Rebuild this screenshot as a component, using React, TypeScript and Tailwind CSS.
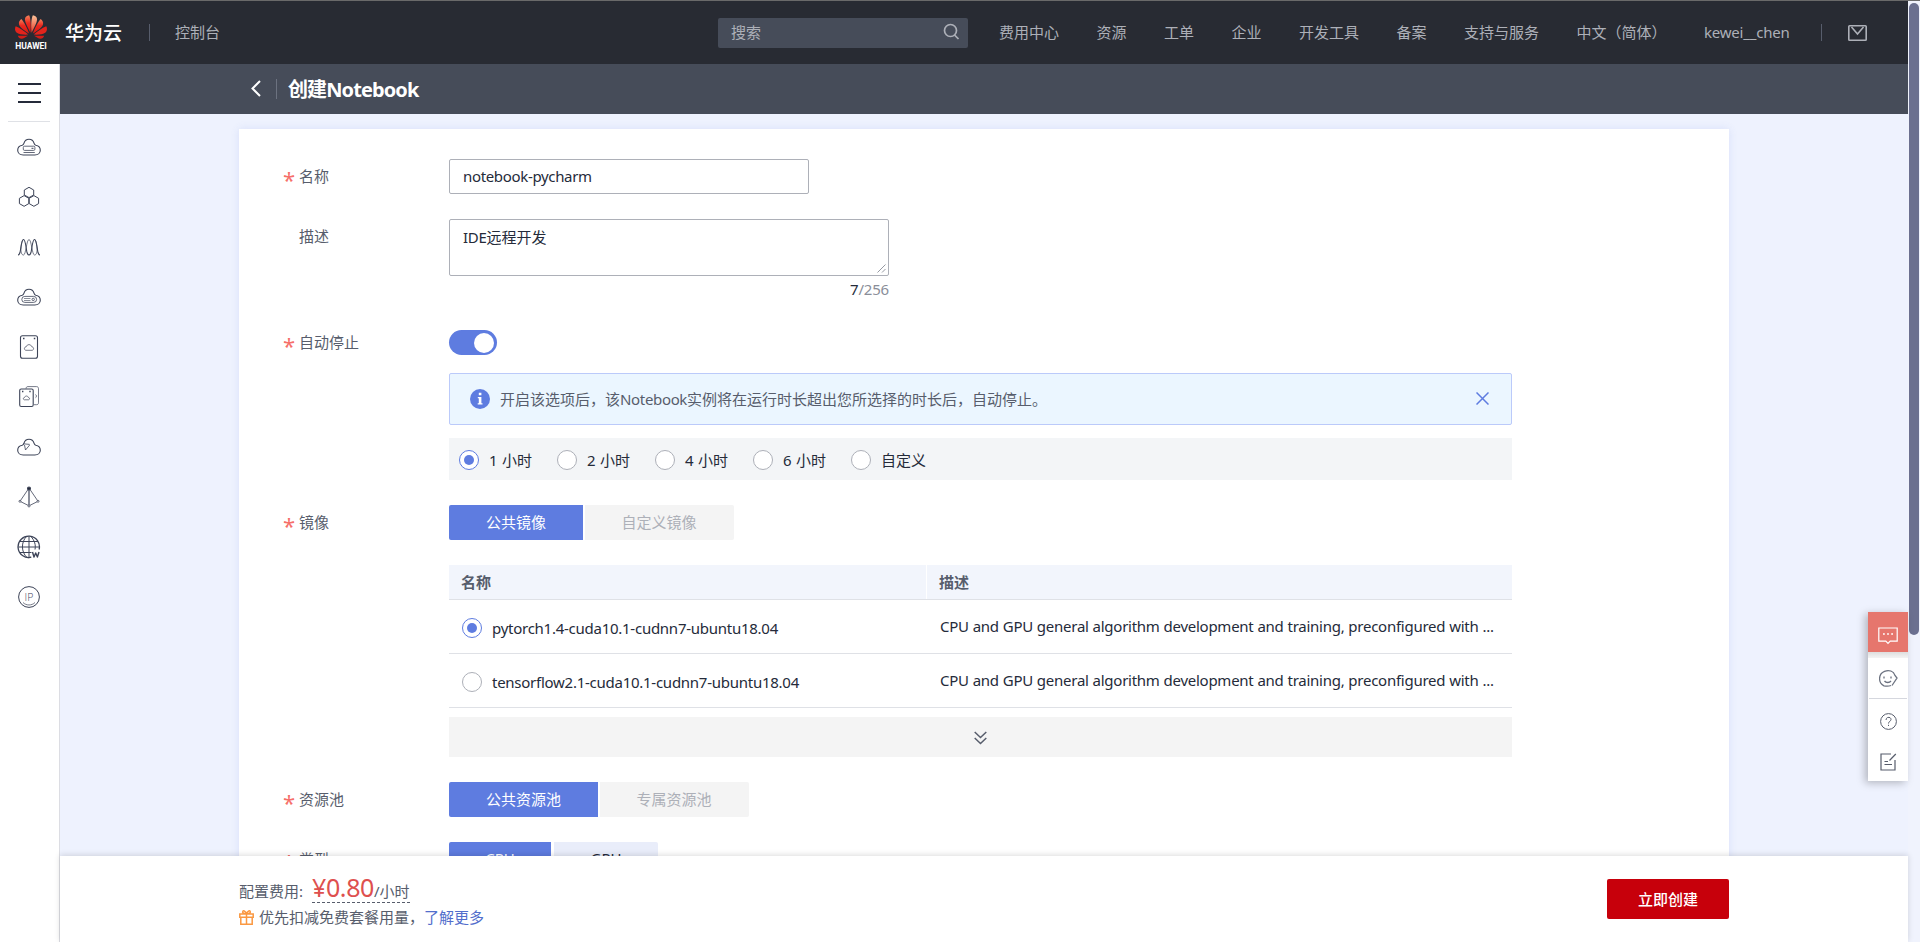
import React from "react";

const navItems = ["费用中心", "资源", "工单", "企业", "开发工具", "备案", "支持与服务", "中文（简体）"];

const hours = [
  { id: 1, title: "1 小时" },
  { id: 2, title: "2 小时" },
  { id: 3, title: "4 小时" },
  { id: 4, title: "6 小时" },
  { id: 5, title: "自定义" },
];

const images = [
  {
    id: 1,
    title: "pytorch1.4-cuda10.1-cudnn7-ubuntu18.04",
    content: "CPU and GPU general algorithm development and training, preconfigured with ...",
  },
  {
    id: 2,
    title: "tensorflow2.1-cuda10.1-cudnn7-ubuntu18.04",
    content: "CPU and GPU general algorithm development and training, preconfigured with ...",
  },
];

const cloud =
  "M6.2 20C3 20 .7 18 .7 15.2c0-2.600 1.900-4.400 4.500-4.900 1-.3 1.300-.8 1.700-2C7.700 5.600 9.700 4.200 12 4.200s4.300 1.400 5.100 4.100c.4 1.200.7 1.700 1.700 2 2.600.5 4.500 2.300 4.500 4.900 0 2.800-2.300 4.800-5.500 4.800z";

const HuaweiLogo = () => (
  <svg width="32" height="25" viewBox="0 0 32 25">
    <defs>
      <linearGradient id="petal" x1="0" y1="0" x2="0" y2="1">
        <stop offset="0" stopColor="#f4845c" />
        <stop offset="0.45" stopColor="#ea2a20" />
        <stop offset="1" stopColor="#d9150f" />
      </linearGradient>
      <linearGradient id="petalLight" x1="0" y1="0" x2="0" y2="1">
        <stop offset="0" stopColor="#fbc39a" />
        <stop offset="1" stopColor="#ea3a28" />
      </linearGradient>
    </defs>
    <path d="M15.400 17.800C12.600 12.200 10.200 8 9.900 4.600 9.800 1.800 12 .5 14.100.2c1.700 3 2 10.600 1.300 17.600z" fill="url(#petal)" />
    <path d="M16.600 17.800C19.400 12.200 21.800 8 22.100 4.600 22.200 1.800 20 .5 17.900.2c-1.700 3-2 10.600-1.300 17.600z" fill="url(#petalLight)" />
    <path d="M14.200 18.600C10.600 16.400 5 12.700 4 9.500c-.6-2.600.8-4.700 2.400-5.600 2.500 3 6 9.400 7.800 14.700z" fill="url(#petal)" />
    <path d="M17.800 18.600C21.400 16.400 27 12.700 28 9.500c.6-2.600-.8-4.700-2.400-5.600-2.500 3-6 9.400-7.800 14.700z" fill="url(#petal)" />
    <path d="M13.300 19.600C9.200 19.800 3.600 19.600 1.500 17.600-.4 15.800-.2 13.200.7 11.300c4.200 1.700 9.300 5.200 12.600 8.300z" fill="#e3241c" />
    <path d="M18.700 19.600c4.100.2 9.700 0 11.800-2 1.900-1.800 1.700-4.400.8-6.300-4.200 1.700-9.300 5.200-12.600 8.300z" fill="#e3241c" />
    <path d="M13 20.700c-2.600 1.500-4.500 3-6.300 3.100-2 .1-3.200-1.300-3.900-3.100z" fill="#d41d17" />
    <path d="M19 20.700c2.600 1.500 4.500 3 6.300 3.100 2 .1 3.200-1.300 3.900-3.100z" fill="#d41d17" />
  </svg>
);

const SideIcon: React.FC<{ children: React.ReactNode }> = ({ children }) => (
  <div className="flex h-[50px] items-center justify-center">
    <svg width="24" height="24" viewBox="0 0 24 24" fill="none" stroke="#3d4458" strokeWidth="1.1" strokeLinejoin="round">
      {children}
    </svg>
  </div>
);

const Sidebar = () => (
  <aside className="flex w-[60px] shrink-0 flex-col border-r border-[#dcdde3] bg-white pr-px">
    <div className="flex h-[57px] flex-col items-center justify-center gap-[7px] pt-px">
      <div className="h-[2px] w-[23px] bg-[#252b3a]" />
      <div className="h-[2px] w-[23px] bg-[#252b3a]" />
      <div className="h-[2px] w-[23px] bg-[#252b3a]" />
    </div>
    <div className="mx-2 h-px bg-[#dfe1e6]" />
    <SideIcon>
      <path d={cloud} />
      <rect x="6.300" y="11.200" width="11.600" height="4.200" rx="1.200" strokeWidth="0.800" />
      <path d="M14.500 13.300h2" strokeWidth="1" />
      <path d="M6.500 17.500h11.300" strokeWidth="0.800" />
    </SideIcon>
    <SideIcon>
      <g strokeWidth="1">
        <path d="M12 2.300l4.700 2.700v5L12 12.600 7.300 10V5z" />
        <path d="M7.100 10.600l4.700 2.700v5.300l-4.700 2.700-4.700-2.700v-5.300z" />
        <path d="M16.900 10.600l4.700 2.700v5.300l-4.700 2.700-4.700-2.700v-5.300z" />
      </g>
    </SideIcon>
    <SideIcon>
      <path d="M1 20c1 0 1.500-.8 2-2.500C4 13 4.500 4.500 6.500 4.500S9 13 10 17.500c.5 1.700 1 2.500 2 2.500s1.500-.8 2-2.500c1-4.500 1.500-13 3.500-13S20 13 21 17.500c.5 1.700 1 2.500 2 2.500" />
      <path d="M6.500 20c-2 0-2.800-3-2.500-7s1.200-8.500 2.500-8.500M6.500 20C9 20 9.500 4.500 12 4.500S15 20 17.500 20c2 0 2.800-3 2.500-7s-1.200-8.500-2.500-8.500" strokeWidth="0.700" />
    </SideIcon>
    <SideIcon>
      <path d={cloud} />
      <rect x="4.800" y="11.400" width="14.800" height="6" rx="3" strokeWidth="0.800" />
      <circle cx="16.200" cy="14.400" r="1.200" strokeWidth="0.800" />
      <path d="M7 13.500h6.500M7 15.500h6.500" strokeWidth="0.600" />
    </SideIcon>
    <SideIcon>
      <rect x="3.500" y="0.700" width="17" height="22.600" rx="2" />
      <path d="M6 3.500h1.500M16.800 3.500h1.500" strokeWidth="1.300" />
      <path d="M8.800 15.300c-1.900-.4-1.900-3.300.3-3.400.8-3 5-3 5.800 0 2.200.1 2.200 3 .3 3.400z" strokeWidth="0.700" />
    </SideIcon>
    <SideIcon>
      <path d="M9 3.600c0-1.200.7-2 2-2h8.500c1.300 0 2 .8 2 2v14.200c0 1.200-.7 1.900-2 1.900H17" strokeWidth="0.700" />
      <path d="M18.500 9.500c1.200.3 1.200 3 0 3.200" strokeWidth="0.700" />
      <rect x="2.700" y="4" width="13.500" height="17.500" rx="1.500" />
      <path d="M5 6.500h1.400M12.300 6.500h1.400" strokeWidth="1.300" />
      <path d="M7.300 14.800c-1.300-.3-1.300-2.200.2-2.300.6-2 3.300-2 3.900 0 1.500.1 1.500 2 .2 2.300z" strokeWidth="0.700" />
    </SideIcon>
    <SideIcon>
      <path d={cloud} />
      <path d="M6.200 8.800l6.500.600M7.500 10l1 5 4.200-5" strokeWidth="0.800" />
    </SideIcon>
    <SideIcon>
      <path d="M11 4.500L3.500 15.500M13 4.500l7.500 11M4 16.800l7 3.500M20 16.800l-7 3.500" strokeWidth="0.800" />
      <path d="M12 4v16" strokeWidth="1.200" />
      <circle cx="12" cy="3.500" r="1.500" fill="#252b3a" />
      <circle cx="3" cy="16.300" r="1" strokeWidth="0.800" />
      <circle cx="21" cy="16.300" r="1" strokeWidth="0.800" />
      <circle cx="12" cy="21" r="1" strokeWidth="0.800" />
    </SideIcon>
    <SideIcon>
      <path d="M22.100 14.500a10.700 10.700 0 1 0-7.800 7.700" strokeWidth="1.300" />
      <path d="M14 22.300c-1.300.5-2.600.5-4 .2C4 17 4 7 9.500 1.500M14 1.500c3.500 4 5 8.500 4 13M12 1.300v21.400M1.300 12h21.400M3 6.500h18M3 17.500h11.500" strokeWidth="1" />
      <path d="M15.500 17l1.500 5 1.700-4 1.700 4 1.600-5" strokeWidth="1.400" />
    </SideIcon>
    <SideIcon>
      <circle cx="12" cy="12" r="10.400" strokeWidth="1" />
      <path d="M6 17.500c3.300 3.300 8.700 3.300 12 0" strokeWidth="0.700" />
      <text x="12" y="15.500" textAnchor="middle" fontSize="10.500" fontWeight="300" fill="#3d4458" stroke="none" fontFamily="Open Sans, sans-serif">
        IP
      </text>
    </SideIcon>
  </aside>
);

const Header = () => (
  <header className="flex h-16 shrink-0 items-center border-t border-[#6a6a6a] bg-[#282b33] text-[15px] text-[#adb0b8]">
    <div className="ml-[15px] flex w-8 flex-col items-center gap-[3px]">
      <HuaweiLogo />
      <span className="font-['Roboto',sans-serif] text-[8.500px] leading-[7px] font-bold text-white">HUAWEI</span>
    </div>
    <span className="ml-[18px] text-[19px] font-medium text-white">华为云</span>
    <div className="ml-[27px] h-[17px] w-px bg-[#575d6c]" />
    <span className="ml-[25px] pb-[2px]">控制台</span>
    <div className="mr-[31px] ml-auto flex h-[30px] w-[250px] items-center justify-between rounded-xs bg-[#464c59] pr-[8px] pb-[2px] pl-[13px]">
      <span>搜索</span>
      <svg width="17" height="17" viewBox="0 0 17 17" fill="none" stroke="#adb0b8" strokeWidth="1.700">
        <circle cx="7.500" cy="7.500" r="6" />
        <path d="M11.500 12l4 4" />
      </svg>
    </div>
    <nav className="flex gap-[37.500px] pb-[2px]">
      {navItems.map(item => (
        <span key={item}>{item}</span>
      ))}
      <span className="w-[86px] tracking-[-0.200px] whitespace-nowrap">kewei__chen</span>
    </nav>
    <div className="ml-[31px] h-[17px] w-px bg-[#575d6c]" />
    <svg className="mr-[41px] ml-[26px]" width="19" height="16" viewBox="0 0 19 16" fill="none" stroke="#adb0b8" strokeWidth="1.600">
      <rect x="0.800" y="0.800" width="17.400" height="14.400" rx="0.800" />
      <path d="M3.500 2l6 7 6-7" />
    </svg>
  </header>
);

const Radio: React.FC<{ checked: boolean }> = ({ checked }) => (
  <span
    className={`flex size-5 shrink-0 items-center justify-center rounded-full border bg-white ${
      checked ? "border-[#5e7ce0]" : "border-[#adb0b8]"
    }`}
  >
    {checked && <span className="size-[10px] rounded-full bg-[#5e7ce0]" />}
  </span>
);

interface FormRowProps {
  label: string;
  required?: boolean;
  short?: boolean;
  children: React.ReactNode;
}

const FormRow: React.FC<FormRowProps> = ({ label, required, short, children }) => (
  <div className="flex shrink-0">
    <div className={`flex w-[166px] shrink-0 items-center pb-[2px] ${short ? "h-[25px]" : "h-[35px]"}`}>
      <span className="w-4 pt-[7px] text-[22px] leading-none text-[#f66f6a]">{required && "*"}</span>
      <span className="text-[#575d6c]">{label}</span>
    </div>
    <div className="w-[1063px]">{children}</div>
  </div>
);

const ImageTable = () => (
  <div className="mt-[25px]">
    <div className="flex h-[35px] border-b border-[#dfe1e6] bg-[#f2f5fc] font-bold text-[#575d6c]">
      <div className="flex w-[478px] items-center border-r border-white pb-px pl-3">名称</div>
      <div className="flex items-center pb-px pl-[12px]">描述</div>
    </div>
    {images.map((item, index) => (
      <div key={item.id} className="flex h-[54px] border-b border-[#dfe1e6]">
        <div className="flex w-[491px] items-center gap-[10px] pt-[2px] pl-[13px]">
          <Radio checked={index === 0} />
          <span className="tracking-[-0.260px]">{item.title}</span>
        </div>
        <div className="flex items-center pb-[1px] tracking-[-0.260px] [word-spacing:0.3px] whitespace-nowrap">
          {item.content}
        </div>
      </div>
    ))}
    <div className="mt-[9px] flex h-10 items-center justify-center bg-[#f4f4f4] pt-[2px]">
      <svg width="13" height="14" viewBox="0 0 13 14" fill="none" stroke="#575d6c" strokeWidth="1.500">
        <path d="M0.700 1l5.800 5.500L12.300 1M0.700 7l5.800 5.500L12.300 7" />
      </svg>
    </div>
  </div>
);

const CreateForm = () => (
  <div className="mx-auto flex w-[1490px] flex-col gap-[25px] bg-white pt-[30px] pl-11 shadow-[0_0_8px_rgba(94,124,224,0.150)]">
    <FormRow label="名称" required>
      <div className="flex h-[35px] w-[360px] items-center rounded-xs border border-[#adb0b8] pb-[2px] pl-[13px] tracking-[-0.340px]">
        notebook-pycharm
      </div>
    </FormRow>
    <FormRow label="描述">
      <div className="flex h-[57px] w-[440px] items-end justify-between rounded-xs border border-[#adb0b8] pl-[13px]">
        <span className="self-start pt-[6px]">
          <span className="tracking-[-0.300px]">IDE</span>远程开发
        </span>
        <svg className="mr-[2px] mb-[2px]" width="9" height="9" viewBox="0 0 9 9" stroke="#8a8e99" strokeWidth="0.900">
          <path d="M0.500 8.500l8-8M5 8.500L8.500 5" />
        </svg>
      </div>
      <div className="h-[29px] w-[440px] pt-[2px] text-right tracking-[-0.200px] text-[#8a8e99]">
        <span className="text-[#252b3a]">7</span>/256
      </div>
    </FormRow>
    <FormRow label="自动停止" required short>
      <div className="flex h-[25px] w-12 items-center justify-end rounded-full bg-[#5e7ce0] pr-[3px]">
        <div className="size-5 rounded-full bg-white" />
      </div>
      <div className="mt-[18px] flex h-[52px] items-center rounded-xs border border-[#bbcafa] bg-[#ebf6ff] pr-[22px] pl-5 text-[#575d6c]">
        <svg width="20" height="20" viewBox="0 0 20 20">
          <circle cx="10" cy="10" r="10" fill="#5e7ce0" />
          <path d="M8.800 3.800h2.600v2.500H8.800zM7.800 8h3.600v6.200h1.100v1.300H7.700v-1.300h1.100v-5h-1z" fill="#fff" />
        </svg>
        <span className="ml-[10px] flex-1">
          开启该选项后，该<span className="tracking-[-0.340px]">Notebook</span>实例将在运行时长超出您所选择的时长后，自动停止。
        </span>
        <svg className="mb-[2px]" width="13" height="13" viewBox="0 0 13 13" stroke="#5e7ce0" strokeWidth="1.500">
          <path d="M0.500 0.500l12 12M12.500 0.500l-12 12" />
        </svg>
      </div>
      <div className="mt-[13px] flex h-[42px] items-center bg-[#f3f5f7] pl-[10px]">
        {hours.map((item, index) => (
          <div key={item.id} className="flex w-[98px] items-center gap-[10px] pt-px whitespace-nowrap [word-spacing:0.6px]">
            <Radio checked={index === 0} />
            <span>{item.title}</span>
          </div>
        ))}
      </div>
    </FormRow>
    <FormRow label="镜像" required>
      <div className="flex h-[35px] gap-[2px]">
        <div className="flex w-[134px] items-center justify-center rounded-l-xs bg-[#5e7ce0] pb-[2px] text-white">公共镜像</div>
        <div className="flex w-[149px] items-center justify-center rounded-r-xs bg-[#f4f4f4] pr-px pb-[2px] text-[#adb0b8]">自定义镜像</div>
      </div>
      <ImageTable />
    </FormRow>
    <FormRow label="资源池" required>
      <div className="flex h-[35px] gap-[2px]">
        <div className="flex w-[149px] items-center justify-center rounded-l-xs bg-[#5e7ce0] pb-[2px] text-white">公共资源池</div>
        <div className="flex w-[149px] items-center justify-center rounded-r-xs bg-[#f4f4f4] pr-px pb-[2px] text-[#adb0b8]">专属资源池</div>
      </div>
    </FormRow>
    <FormRow label="类型" required>
      <div className="flex h-[35px] gap-[3px]">
        <div className="flex w-[102px] items-center justify-center rounded-l-xs bg-[#5e7ce0] pb-[3px] text-white">CPU</div>
        <div className="flex w-[104px] items-center justify-center rounded-r-xs bg-[#e9edfa] pb-[3px]">GPU</div>
      </div>
    </FormRow>
  </div>
);

const Footer = () => (
  <footer className="relative flex h-[86px] shrink-0 items-start justify-between bg-white pr-[179px] pl-[179px] text-[#575d6c] shadow-[0_-1px_6px_rgba(0,0,0,0.140)]">
    <div className="pt-[14px]">
      <div className="flex h-[33px] items-end">
        <span className="pb-[1px]">配置费用:</span>
        <span className="ml-[9px] flex h-[33px] items-baseline border-b border-dashed border-[#575d6c]">
          <span className="text-[25px] leading-[34px] tracking-[-0.400px] text-[#de504e]">¥0.80</span>
          <span>/小时</span>
        </span>
      </div>
      <div className="mt-[3px] flex items-center">
        <svg width="15" height="15" viewBox="0 0 15 15" fill="none" stroke="#fa9841" strokeWidth="1.500">
          <path d="M0.800 4h13.400v3.300H0.800zM1.800 7.300v6.900h11.400V7.300M7.500 4v10M7.500 4C5 4 3 2.500 3.800 1.300S7 1.500 7.500 4c.5-2.500 2.900-3.900 3.700-2.700S10 4 7.500 4" />
        </svg>
        <span className="ml-[5px]">优先扣减免费套餐用量，</span>
        <span className="text-[#526ecc]">了解更多</span>
      </div>
    </div>
    <button className="mt-[23px] h-10 w-[122px] rounded-xs bg-[#c7000b] font-medium text-white">立即创建</button>
  </footer>
);

const FloatingTools = () => (
  <div className="absolute top-[612px] right-3 flex w-10 flex-col bg-white text-[#575d6c] shadow-[-3px_2px_8px_rgba(0,0,0,0.250)]">
    <div className="flex h-10 items-center justify-center bg-[#e6766d] pt-2">
      <svg width="20" height="18" viewBox="0 0 20 18" fill="none" stroke="#fff" strokeWidth="1.200">
        <path d="M0.800 1h18.400v13.200h-7L10 16.500l-2.200-2.300h-7z" />
        <path d="M5 7h1.800M9.100 7h1.800M13.200 7H15" strokeWidth="1.600" />
      </svg>
    </div>
    <div className="h-[6px] bg-linear-to-b from-[#dedede] to-[#f4f4f4]" />
    <div className="mx-px flex h-[41px] items-center justify-center border-b border-[#d5d7de]">
      <svg width="19" height="17" viewBox="0 0 19 17" fill="none" stroke="#6c7280" strokeWidth="1.300">
        <path d="M12 15.500c-2 .8-5 .8-7 .3-6-3-6-11.800.5-14.500C10 0 14.500 1 16 5.500l2 2.500-5 7.500" />
        <path d="M5 6.500v2M12 6.500v2M5.500 11c1.500 2 5 2 6.500 0" />
      </svg>
    </div>
    <div className="flex h-[44px] items-center justify-center pl-px">
      <svg width="17" height="17" viewBox="0 0 17 17" fill="none" stroke="#575d6c" strokeWidth="1">
        <circle cx="8.500" cy="8.500" r="7.900" />
        <path d="M6 7c0-3.500 5-3.500 5-.5 0 1.800-2.500 1.800-2.500 4M8.500 11.800v1.200" />
      </svg>
    </div>
    <div className="flex h-[38px] items-center justify-center">
      <svg width="17" height="18" viewBox="0 0 17 18" fill="none" stroke="#575d6c" strokeWidth="1.200">
        <path d="M11 1H1v16h14V7M15.800 1L9.500 7.500M4.500 8.500H8M4.500 11.500h7.500" />
      </svg>
    </div>
  </div>
);

const App: React.FC = () => {
  return (
    <div className="relative flex h-[942px] w-[1920px] overflow-hidden bg-[#eef2fe] font-['Noto_Sans','Noto_Sans_CJK_SC',sans-serif] text-[15px] leading-[22px] text-[#252b3a]">
      <div className="flex w-[1908px] flex-col">
        <Header />
        <div className="flex min-h-0 flex-1">
          <Sidebar />
          <main className="flex min-w-0 flex-1 flex-col">
            <div className="flex h-[50px] shrink-0 items-center bg-[#464c59] text-white">
              <svg className="mb-px ml-[191px]" width="10" height="17" viewBox="0 0 10 17" fill="none" stroke="#fff" strokeWidth="2">
                <path d="M9 1L1.500 8.500 9 16" />
              </svg>
              <div className="ml-[15px] h-5 w-px bg-[#6c7280]" />
              <h1 className="ml-[11px] pt-[2px] text-[20px] font-bold tracking-[-0.900px]">创建Notebook</h1>
            </div>
            <div className="min-h-0 flex-1 overflow-hidden pt-[15px]">
              <CreateForm />
            </div>
            <Footer />
          </main>
        </div>
      </div>
      <div className="flex-1 border-t border-[#6a6a6a] bg-[#f0f3fd] pt-[2px] pl-px">
        <div className="h-[632px] w-[10px] rounded-full bg-[#6b7090]" />
      </div>
      <FloatingTools />
    </div>
  );
};

export default App;
